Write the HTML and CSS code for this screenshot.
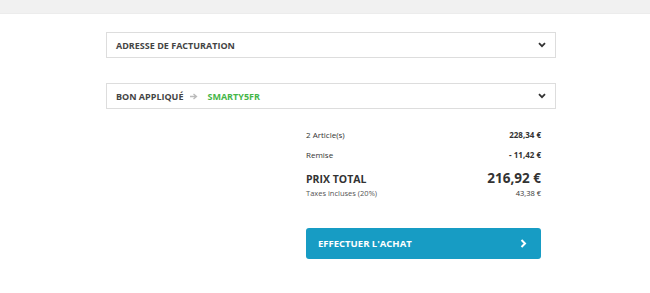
FILE: index.html
```html
<!DOCTYPE html>
<html lang="fr">
<head>
    <meta charset="UTF-8">
    <title>Panier</title>
    <link rel="stylesheet" href="styles.css">
</head>
<body>
    <div class="top-bar"></div>

    <div class="checkout">
        <div class="panel">
            <span class="panel-title">Adresse de facturation</span>
            <svg class="chevron" width="8" height="6" viewBox="0 0 8 6"><path d="M1 1.2 L4 4.2 L7 1.2" fill="none" stroke="#333" stroke-width="1.8"/></svg>
        </div>

        <div class="panel">
            <span class="panel-title">Bon appliqué</span>
            <svg class="arrow" width="8" height="7" viewBox="0 0 8 7"><path d="M0 3.5 H6 M3.5 1 L6.5 3.5 L3.5 6" fill="none" stroke="#bbb" stroke-width="1.3"/></svg>
            <span class="coupon">SMARTY5FR</span>
            <svg class="chevron" width="8" height="6" viewBox="0 0 8 6"><path d="M1 1.2 L4 4.2 L7 1.2" fill="none" stroke="#333" stroke-width="1.8"/></svg>
        </div>

        <div class="summary">
            <div class="row">
                <span>2 Article(s)</span>
                <span class="value">228,34 €</span>
            </div>
            <div class="row">
                <span>Remise</span>
                <span class="value">- 11,42 €</span>
            </div>
            <div class="row total">
                <span>PRIX TOTAL</span>
                <span class="value">216,92 €</span>
            </div>
            <div class="row taxes">
                <span>Taxes incluses (20%)</span>
                <span class="value">43,38 €</span>
            </div>

            <button class="buy-button">
                <span>Effectuer l'achat</span>
                <svg width="7" height="9" viewBox="0 0 7 9"><path d="M1.5 1 L5 4.5 L1.5 8" fill="none" stroke="#fff" stroke-width="2"/></svg>
            </button>
        </div>
    </div>
</body>
</html>
```

FILE: styles.css
```css
body {
    margin: 0;
    font-family: "Open Sans", Arial, sans-serif;
    background-color: #fff;
    color: #333;
}

.top-bar {
    height: 13px;
    background-color: #f1f1f1;
    border-bottom: 1px solid #ececec;
}

.checkout {
    width: 450px;
    margin-left: 106px;
    padding-top: 18px;
}

.panel {
    display: flex;
    align-items: center;
    height: 24px;
    padding: 0 9px;
    border: 1px solid #ddd;
    margin-bottom: 25px;
}

.panel-title {
    font-size: 9px;
    font-weight: 700;
    text-transform: uppercase;
    color: #444;
}

.arrow {
    margin: 0 9px 0 7px;
}

.coupon {
    font-size: 9px;
    font-weight: 700;
    color: #45b649;
}

.chevron {
    margin-left: auto;
}

.summary {
    width: 235px;
    margin: -5px 15px 0 auto;
}

.row {
    display: flex;
    justify-content: space-between;
    align-items: baseline;
    font-size: 8px;
    color: #333;
    margin-bottom: 9px;
}

.row .value {
    font-weight: 700;
}

.row.total {
    font-size: 10.5px;
    font-weight: 700;
    margin-bottom: 1px;
    margin-top: 2px;
}

.row.total .value {
    font-size: 13.5px;
}

.row.taxes {
    font-size: 7.5px;
    color: #555;
}

.row.taxes .value {
    font-weight: 400;
    color: #333;
}

.buy-button {
    display: flex;
    justify-content: space-between;
    align-items: center;
    width: 100%;
    height: 31px;
    margin-top: 30px;
    padding: 0 14px 0 12px;
    border: none;
    border-radius: 3px;
    background-color: #179cc4;
    color: #fff;
    font-family: inherit;
    font-size: 9.5px;
    font-weight: 700;
    text-transform: uppercase;
    cursor: pointer;
}
```
